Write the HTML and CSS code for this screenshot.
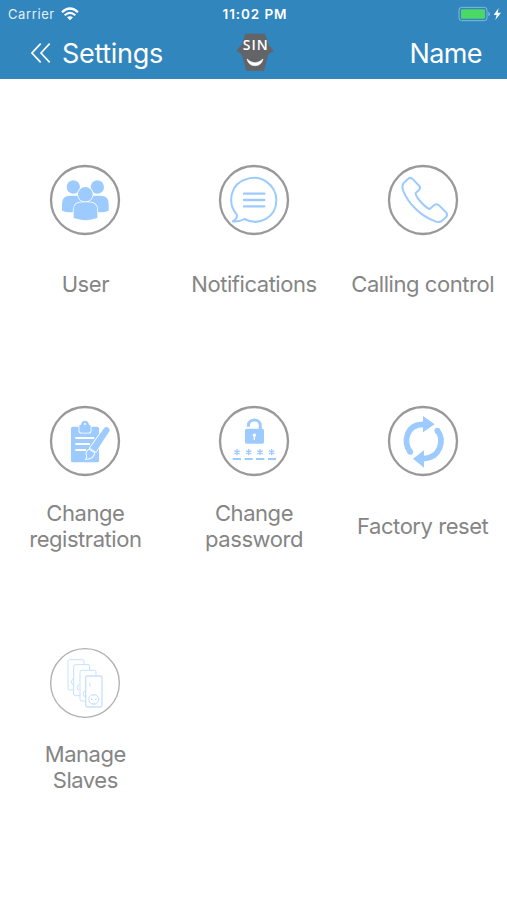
FILE: index.html
```html
<!DOCTYPE html>
<html lang="en">
<head>
<meta charset="utf-8">
<title>Settings</title>
<link rel="stylesheet" href="styles.css">
</head>
<body>
<header class="header">
  <div class="status">
    <div class="carrier"><span>Carrier</span>
      <svg class="wifi" viewBox="0 0 54 42"><g fill="none" stroke="#fff" stroke-width="6.5"><path d="M3 16Q27-7 51 16"/><path d="M11 25Q27 10 43 25"/></g><path d="M18 31Q27 24 36 31L27 40Z" fill="#fff"/></svg>
    </div>
    <div class="clock">11:02 PM</div>
    <div class="power">
      <svg class="battery" viewBox="0 0 132 48"><rect x="3" y="4" width="84" height="40" rx="8" fill="none" stroke="#83b9de" stroke-width="3"/><rect x="9" y="10" width="72" height="28" rx="3" fill="#4bd865"/><path d="M91 17q5 2 5 7t-5 7Z" fill="#83b9de"/><path d="M122 6L107 27H116L112 42L129 20H119Z" fill="#fff"/></svg>
    </div>
  </div>
  <nav class="nav">
    <div class="back">
      <svg class="chevrons" viewBox="0 0 60 60"><path d="M29 2L3 30L29 58M56 2L30 30L56 58" fill="none" stroke="#fff" stroke-width="5"/></svg>
      <span>Settings</span>
    </div>
    <svg class="logo" viewBox="0 0 114 114"><path d="M28 2H87L98 35L113 54L97 64L84 113H31L17 64L1 54L16 35Z" fill="#626468"/><text x="59" y="51" text-anchor="middle" class="logo-text">SIN</text><path d="M33 78Q57 101 81 78Q76 98 57 98T33 78Z" fill="#fff" stroke="#fff" stroke-width="2" stroke-linejoin="round"/></svg>
    <div class="name">Name</div>
  </nav>
</header>
<main class="grid">
  <section class="item">
    <svg class="icon" viewBox="0 0 270 270"><circle class="ring" cx="135" cy="135" r="102"/>
      <g class="solid"><circle cx="100" cy="96" r="20"/><circle cx="172" cy="96" r="20"/><path d="M66 167V146Q66 122 90 122H182Q206 122 206 146V167Q188 174 172 171H100Q82 174 66 167Z"/></g>
      <g class="solid gap"><circle cx="136" cy="118" r="22"/><path d="M101 189V166Q101 142 126 142H146Q172 142 172 166V189Q136 202 101 189Z"/></g></svg>
    <div class="label">User</div>
  </section>
  <section class="item">
    <svg class="icon" viewBox="0 0 270 270"><circle class="ring" cx="135" cy="135" r="102"/>
      <path class="line" d="M83 178C54 145 64 86 111 73C157 57 202 90 202 136C202 187 151 215 106 192Q89 202 71 199Q87 190 83 178Z"/><path class="line round" d="M105 116H166M105 135H166M105 154H166"/></svg>
    <div class="label">Notifications</div>
  </section>
  <section class="item">
    <svg class="icon" viewBox="0 0 270 270"><circle class="ring" cx="135" cy="135" r="102"/>
      <path class="line" d="M76 85L90 72Q98 65 105 73L124 93Q129 99 123 105L113 114C112 126 142 158 155 162L169 150Q177 145 184 152L205 173Q210 180 204 187L192 197Q184 204 172 199C127 184 91 145 75 106Q71 94 76 85Z"/></svg>
    <div class="label">Calling control</div>
  </section>
  <section class="item">
    <svg class="icon" viewBox="0 0 270 270"><circle class="ring" cx="135" cy="135" r="102"/>
      <rect class="solid" x="93" y="92" width="84" height="107" rx="5"/>
      <path d="M106 126H163M106 144H150M106 162H138" stroke="#fff" stroke-width="6"/>
      <path class="solid gap" d="M118 90Q118 86 123 86Q125 74 135 74T147 86Q152 86 152 91V104Q152 110 145 110H125Q118 110 118 104Z"/><circle cx="135" cy="84" r="3" fill="#fff"/>
      <path class="solid gap" d="M191 98Q196 91 203 94Q211 99 208 106L168 167L150 156ZM147 161L163 171Q160 187 139 189Q144 180 139 174Q140 164 147 161Z"/></svg>
    <div class="label">Change<br>registration</div>
  </section>
  <section class="item">
    <svg class="icon" viewBox="0 0 270 270"><circle class="ring" cx="135" cy="135" r="102"/>
      <path d="M118 92V89C118 66 154 66 154 89V103" fill="none" stroke="#9dcbff" stroke-width="9"/><rect class="solid" x="108" y="98" width="57" height="45" rx="5"/>
      <path d="M132 121A5 5 0 1 1 140 121L138 123V132H134V123Z" fill="#fff"/>
      <path d="M84 159V178M76 164L92 174M92 164L76 174M119 159V178M111 164L127 174M127 164L111 174M153 159V178M145 164L161 174M161 164L145 174M188 159V178M180 164L196 174M196 164L180 174" stroke="#9dcbff" stroke-width="4"/>
      <path d="M71 189H96M107 189H131M141 189H166M177 189H201" stroke="#9dcbff" stroke-width="6"/></svg>
    <div class="label">Change<br>password</div>
  </section>
  <section class="item">
    <svg class="icon" viewBox="0 0 270 270"><circle class="ring" cx="135" cy="135" r="102"/>
      <g fill="none" stroke="#9dcbff" stroke-width="17"><path d="M97 169C75 139 83 85 137 85"/><path d="M178 103C201 134 186 185 138 188"/></g><g class="solid"><circle cx="97" cy="168" r="8.5"/><circle cx="178" cy="104" r="8.5"/><path d="M135 60L170 85L135 109ZM138 163V215L105 188Z"/></g></svg>
    <div class="label">Factory reset</div>
  </section>
  <section class="item">
    <svg class="icon" viewBox="0 0 270 270"><circle class="ring thin" cx="135" cy="135" r="103"/>
      <g fill="#fff" stroke="#c7e1fd" stroke-width="3"><rect x="84" y="65" width="48" height="91" rx="5"/><path d="M98 122Q89 132 98 140"/><rect x="101" y="80" width="48" height="93" rx="5"/><path d="M117 139Q107 149 117 158"/><rect x="120" y="97" width="48" height="92" rx="5"/><path d="M134 159Q125 168 134 177"/><rect x="137" y="114" width="49" height="93" rx="5" stroke-width="4"/><circle cx="161" cy="184" r="15"/><path d="M156 170Q161 176 166 170M156 198Q161 192 166 198M147 134L151 138L149 142L153 146"/></g><path d="M153 182h4v4h-4zM165 182h4v4h-4z" fill="#b6d6fa"/></svg>
    <div class="label">Manage<br>Slaves</div>
  </section>
</main>
</body>
</html>
```
FILE: styles.css
```css
* { box-sizing: border-box; }
body { margin: 0; width: 507px; height: 900px; overflow: hidden; background: #fff; font-family: Inter, "Liberation Sans", sans-serif; }
.header { height: 79px; background: #3186be; color: #fff; }
.status { display: grid; grid-template-columns: 1fr auto 1fr; height: 27px; align-items: center; padding: 1px 5px 0 8px; font-size: 13px; line-height: 26px; }
.carrier { display: flex; align-items: center; gap: 6px; color: #e3f0f9; letter-spacing: 0.6px; }
.wifi { width: 18px; height: 14px; }
.clock { font-size: 13.5px; font-weight: 600; letter-spacing: 0.9px; }
.power { display: flex; justify-content: flex-end; }
.battery { width: 44px; height: 16px; }
.nav { display: grid; grid-template-columns: 1fr auto 1fr; align-items: center; height: 52px; padding: 0 25px 0 31px; font-size: 27px; letter-spacing: -0.3px; }
.back { display: flex; align-items: center; gap: 11px; }
.chevrons { width: 20px; height: 20px; }
.logo { width: 38px; height: 38px; margin: 0 2px 2px -2px; }
.logo-text { font: 600 42px "Open Sans", sans-serif; letter-spacing: 3px; fill: #fff; }
.name { text-align: right; letter-spacing: -0.6px; }
.grid { display: grid; grid-template-columns: repeat(3, 168.7px); grid-auto-rows: 241.4px; padding: 76px 0 0 1px; }
.item { display: flex; flex-direction: column; align-items: center; gap: 13px; }
.icon { width: 90px; height: 90px; flex: none; }
.label { height: 53px; display: flex; flex-direction: column; justify-content: center; text-align: center; white-space: nowrap; font-size: 22px; line-height: 26.3px; letter-spacing: -0.45px; color: #858585; }
.ring { fill: none; stroke: #999; stroke-width: 7; }
.thin { stroke: #b0b0b0; stroke-width: 4; }
.solid { fill: #9dcbff; }
.gap { stroke: #fff; stroke-width: 5; paint-order: stroke; }
.line { fill: none; stroke: #9dcbff; stroke-width: 6; stroke-linejoin: round; }
.round { stroke-linecap: round; stroke-width: 7; }
```
